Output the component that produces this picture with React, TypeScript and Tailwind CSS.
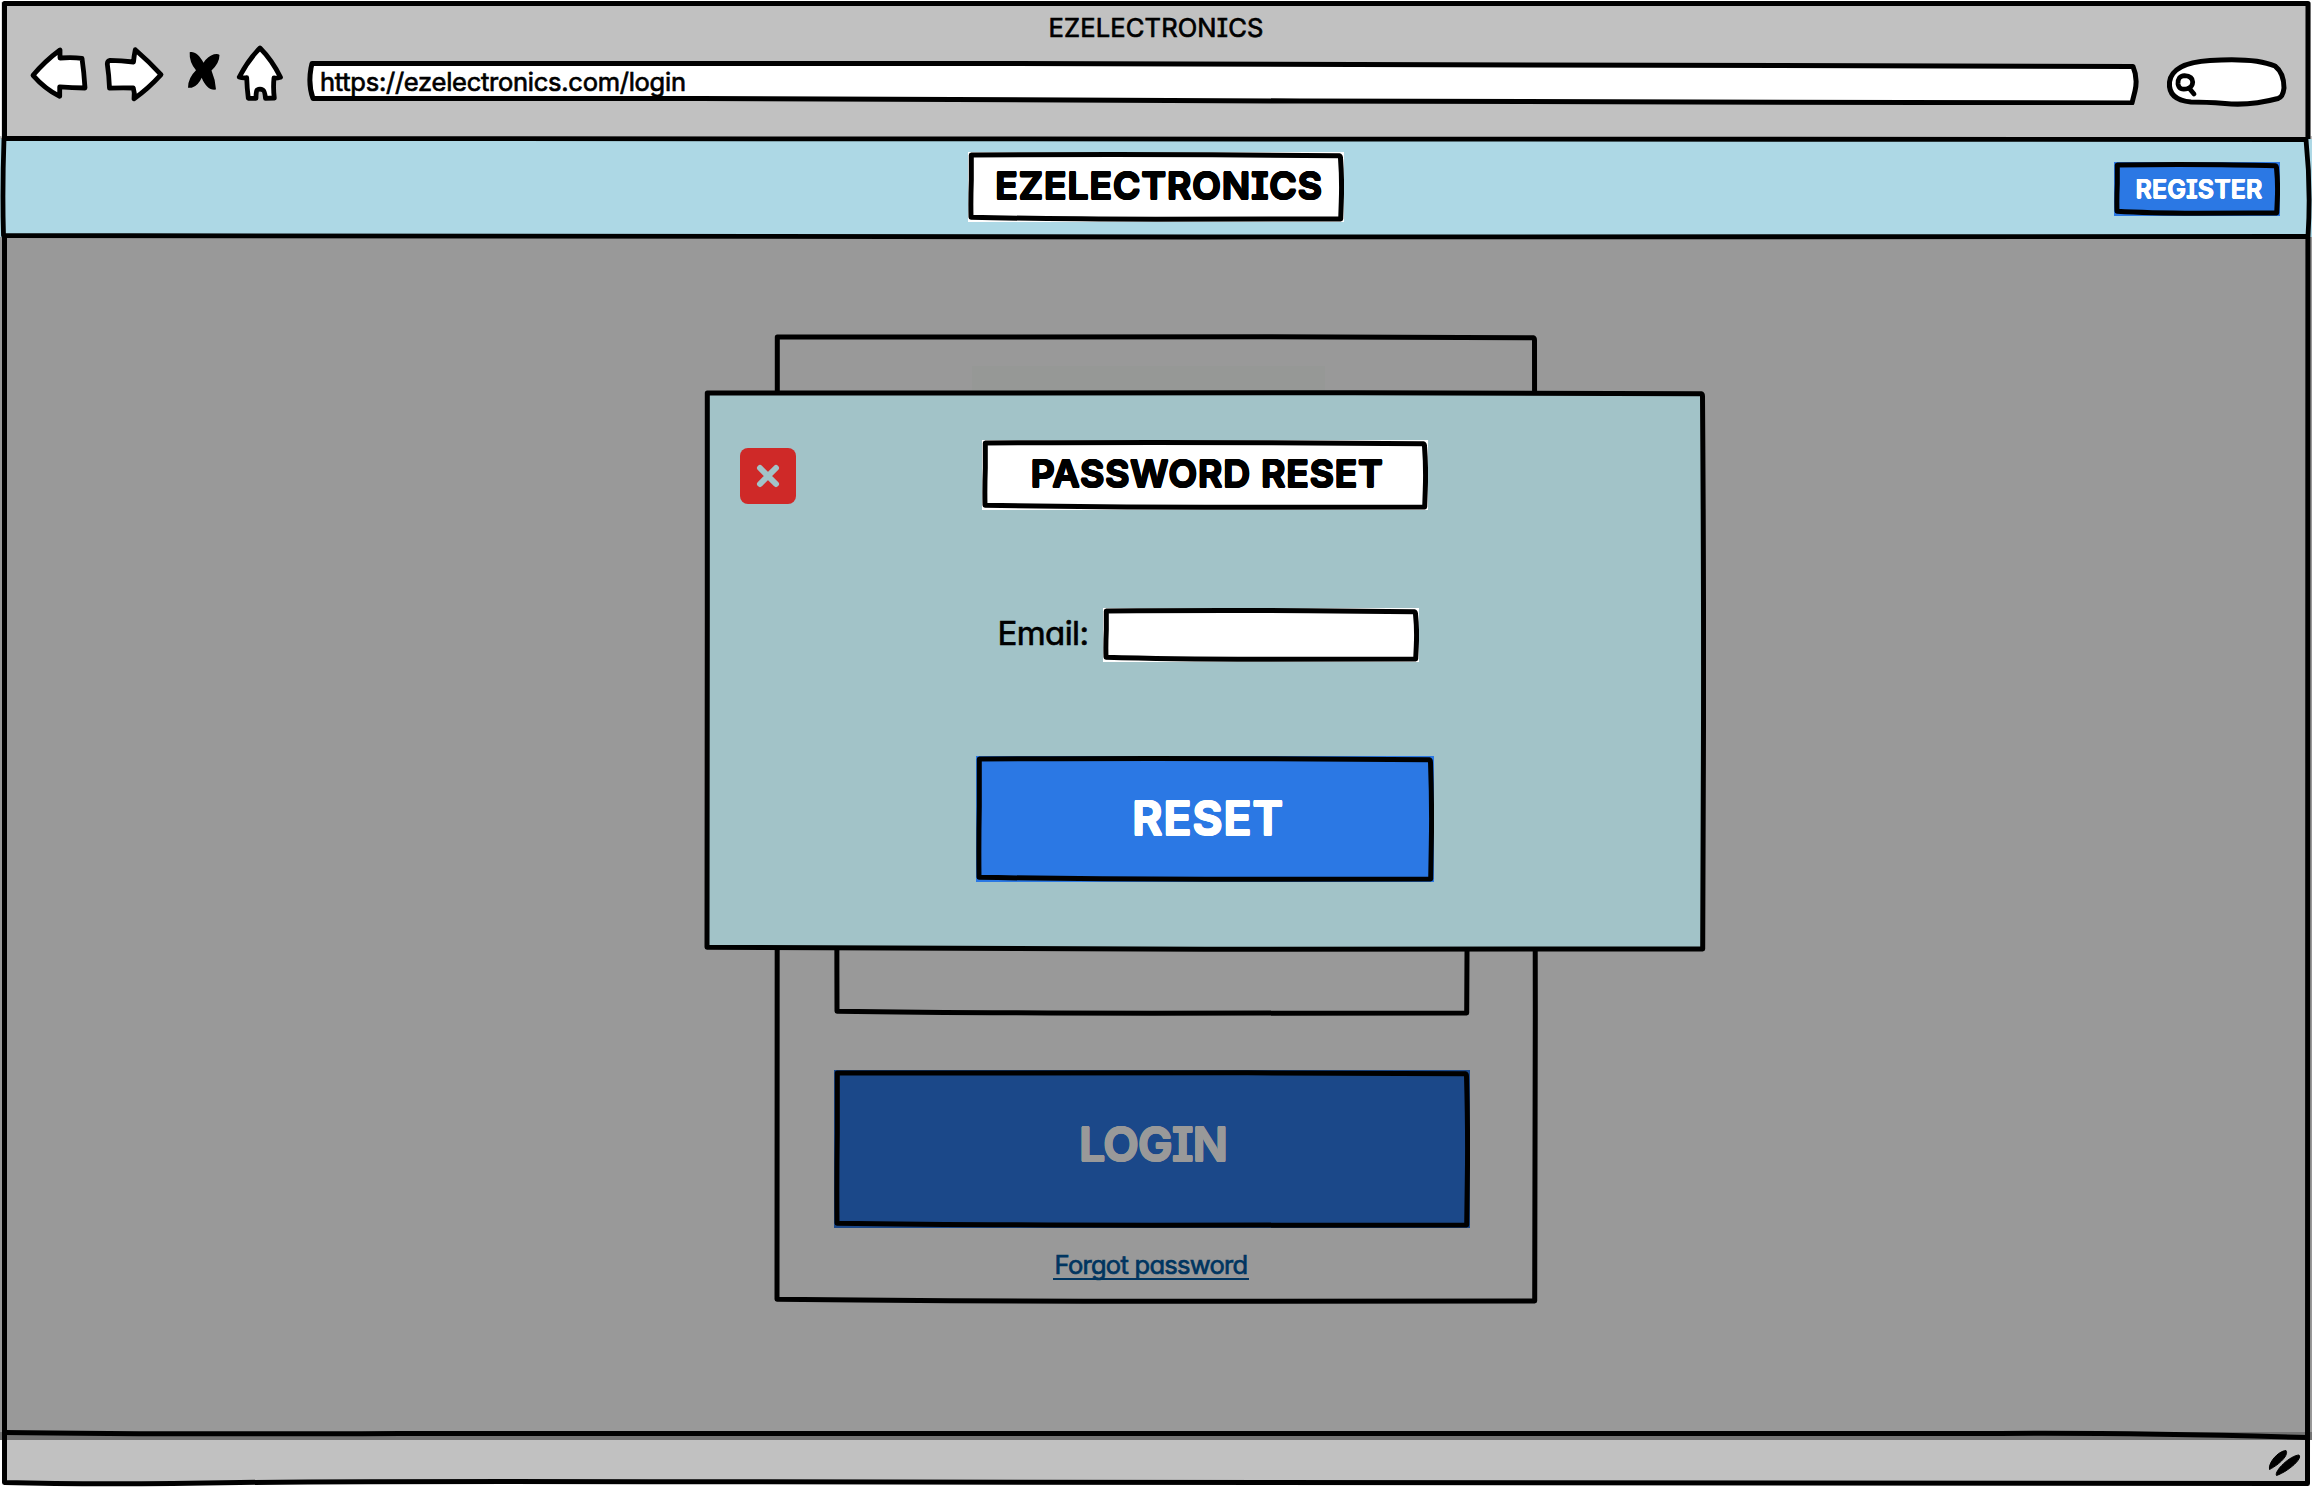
import type { ReactNode } from "react";

const HEAVY =
  "font-semibold [text-shadow:0.9px_0_0_currentColor,-0.9px_0_0_currentColor,0_0.9px_0_currentColor,0_-0.9px_0_currentColor,0.6px_0.6px_0_currentColor,-0.6px_0.6px_0_currentColor,0.6px_-0.6px_0_currentColor,-0.6px_-0.6px_0_currentColor]";
const HEAVY_SMALL =
  "font-semibold [text-shadow:0.5px_0_0_currentColor,-0.5px_0_0_currentColor,0_0.5px_0_currentColor,0_-0.5px_0_currentColor]";
const LIGHT = "font-normal [-webkit-text-stroke:0.7px_currentColor]";

/** Hand-drawn rectangle outline that fills its positioned parent. */
function Sketch({ w, h, fill = "none" }: { w: number; h: number; fill?: string }) {
  const d = [
    `M3.3 3`,
    `Q${w * 0.35} 2.2 ${w * 0.65} 2.8`,
    `T${w - 4.8} 3.7`,
    `Q${w - 3.6} 3.9 ${w - 3.5} 6`,
    `Q${w - 1.9} ${h * 0.4} ${w - 2.7} ${h * 0.7}`,
    `L${w - 3.3} ${h - 3}`,
    `Q${w * 0.75} ${h - 3.2} ${w * 0.5} ${h - 2.8}`,
    `Q${w * 0.2} ${h - 3} 3 ${h - 4.8}`,
    `Q2.6 ${h * 0.7} 3.3 ${h * 0.4}`,
    `Z`,
  ].join(" ");
  return (
    <svg className="pointer-events-none absolute inset-0" width={w} height={h} viewBox={`0 0 ${w} ${h}`}>
      <path d={d} fill={fill} stroke="#000" strokeWidth="5" strokeLinejoin="round" />
    </svg>
  );
}

function SketchBox({ w, h, className, children }: { w: number; h: number; className: string; children?: ReactNode }) {
  return (
    <div className={`relative flex shrink-0 items-center justify-center ${className}`}>
      <Sketch w={w} h={h} />
      {children}
    </div>
  );
}

function NavIcons() {
  return (
    <svg className="block" width="300" height="132" viewBox="0 0 300 132">
      <g fill="#fff" stroke="#000" strokeWidth="4.8" strokeLinejoin="round" strokeLinecap="round">
        <path d="M33 75.3 Q45 61 60 50 L60 58 Q73 57.3 82 58.3 Q84 72 85 88 Q72 87.5 59.700 86.800 L59.700 96.300 Q45 89 33 75.300Z" />
        <path d="M110 60.300 Q121 60.300 133.500 62 Q134 56 135.300 49.700 Q149 61.500 161 74.700 Q148 89 134 98.800 Q135 93 133.300 88 Q121 87.500 109.500 88.200 Q109 75 107.300 64 Q107.300 60.800 110 60.300Z" />
        <path d="M260 48 Q272 60 280.500 77.300 Q277 78.300 274 78 Q273 88 274.300 98 L265.500 98.300 Q264.800 91 263 90 Q260 88.300 257 90 Q256 92 256 98.300 L248.300 98.300 Q247 88 246.700 77.700 Q242.500 78.300 239.300 77 Q248 60 260 48Z" />
      </g>
      <path
        d="M189.7 52.300 C194 51 199.500 55 203.500 62.700 Q208 56 214 54.300 Q218 53.300 219.500 55 Q219.500 63 211.500 70.500 Q215.500 80 216 89.500 C210 90.500 205 86 201.700 77.700 Q198 86 191.700 87.700 L188 87.700 Q188 78 196 70.300 Q189 62 189.700 52.300Z"
        fill="#000"
      />
    </svg>
  );
}

function Chrome() {
  return (
    <div className="relative flex h-[139px] shrink-0 bg-[#c1c1c1]">
      <NavIcons />
      <div className="relative mt-[60px] flex h-[45px] w-[1840px] items-center pl-[20px]">
        <svg className="absolute inset-0" width="1840" height="45" viewBox="0 0 1840 45">
          <path
            d="M12 3.500 L700 3.500 Q1300 4 1833 6.500 Q1838 18 1835 31 L1832 43 Q1300 43 1000 41 Q700 38.500 400 38.500 L13 38.500 Q8 25 11 8Z"
            fill="#fff"
            stroke="#000"
            strokeWidth="5"
            strokeLinejoin="round"
          />
        </svg>
        <span className={`relative -top-px text-[25.5px] leading-none tracking-[-0.26px] ${LIGHT}`}>
          https://ezelectronics.com/login
        </span>
      </div>
      <svg className="ml-6 mt-[50px] block" width="130" height="62" viewBox="2164 50 130 62">
        <path
          d="M2191 102 Q2168 100 2169.500 82 Q2172 63 2210 60.500 Q2255 57.500 2275 66 Q2284 73 2284 88 Q2283 97 2278 98.500 Q2250 106 2225 103.500 Q2205 102 2191 102Z"
          fill="#fff"
          stroke="#000"
          strokeWidth="5"
          strokeLinejoin="round"
        />
        <g fill="none" stroke="#000" strokeWidth="4.800" strokeLinecap="round">
          <path d="M2188 88.500 Q2179 91 2178 84 Q2177.500 76 2184.500 75.600 Q2192.500 76 2192.700 82 Q2192.500 87 2188 88.500Z" />
          <path d="M2189 88 L2194 94" />
        </g>
      </svg>
      <span className={`absolute left-1/2 top-[14px] -translate-x-1/2 text-[25.5px] leading-[27px] tracking-[0.15px] ${LIGHT}`}>
        EZELECTRONICS
      </span>
    </div>
  );
}

function Header() {
  return (
    <header className="relative z-10 grid h-[98px] shrink-0 grid-cols-[1fr_auto_1fr] items-center bg-[#add8e5]">
      <svg className="absolute left-0 -top-[3px]" width="2312" height="104" viewBox="0 0 2312 104">
        <path
          d="M4 2.500 Q1200 2 2306 3.500 Q2311 52 2308 100.500 L1200 101 Q600 101 3.500 99.500 Q2.200 55 4 2.500Z"
          fill="none"
          stroke="#000"
          strokeWidth="4.800"
          strokeLinejoin="round"
        />
      </svg>
      <div />
      <SketchBox w={376} h={70} className="-mt-[3px] h-[70px] w-[376px] bg-white">
        <span className={`relative -top-px left-[3px] text-[37.5px] leading-none tracking-[0.8px] ${HEAVY}`}>EZELECTRONICS</span>
      </SketchBox>
      <div className="flex justify-end pr-8">
        <SketchBox w={166} h={54} className="mt-[2px] h-[54px] w-[166px] bg-[#2b78e4]">
          <span className={`relative left-0.5 text-[25px] leading-none tracking-[0.1px] text-white ${HEAVY_SMALL}`}>REGISTER</span>
        </SketchBox>
      </div>
    </header>
  );
}

function LoginCard() {
  return (
    <section className="relative flex h-[970px] w-[764px] flex-col pl-[60px]">
      <Sketch w={764} h={970} />
      <div className="ml-[138px] mt-[32px] h-10 w-[353px] bg-[#969896]" />
      <SketchBox w={636} h={399} className="mt-[211px] h-[399px] w-[636px]" />
      <SketchBox w={636} h={158} className="mt-[54px] h-[158px] w-[636px] bg-[#1b4889]">
        <span className={`relative -top-[5px] left-px text-[46.5px] leading-none tracking-[-0.9px] text-[#999] ${HEAVY}`}>LOGIN</span>
      </SketchBox>
      <a className={`relative ml-[219px] mt-[21px] flex h-[31px] w-[196px] justify-center border-b-2 border-[#003560] text-[25.5px] leading-[32px] tracking-[-0.72px] whitespace-nowrap text-[#003560] ${LIGHT}`}>
        Forgot password
      </a>
    </section>
  );
}

function ResetDialog() {
  return (
    <div className="absolute left-[704px] top-[153px] flex h-[562px] w-[1002px] flex-col items-center">
      <Sketch w={1002} h={562} fill="#a2c3c8" />
      <div className="relative mt-[50px] grid w-full grid-cols-[1fr_auto_1fr] items-center pl-9">
        <button className="relative top-px flex size-14 items-center justify-center rounded-lg bg-[#cf2928]">
          <svg width="24" height="24" viewBox="0 0 24 24">
            <path d="M4 4 L20 20 M20 4 L4 20" stroke="#a2c3c8" strokeWidth="6" strokeLinecap="round" />
          </svg>
        </button>
        <SketchBox w={446} h={70} className="-ml-9 h-[70px] w-[446px] bg-white">
          <span className={`relative -top-px left-[2px] text-[37.5px] leading-none tracking-[0.68px] ${HEAVY}`}>PASSWORD RESET</span>
        </SketchBox>
      </div>
      <div className="relative mt-[98px] flex h-[54px] items-center gap-[15px] pl-[7px]">
        <span className={`relative -top-[2px] text-[33px] leading-none tracking-[-0.6px] ${LIGHT}`}>Email:</span>
        <SketchBox w={316} h={54} className="h-[54px] w-[316px] bg-white" />
      </div>
      <SketchBox w={458} h={126} className="mt-[94px] h-[126px] w-[458px] bg-[#2b78e4]">
        <span className={`relative -top-px left-[3px] text-[46.5px] leading-none tracking-[0.8px] text-white ${HEAVY}`}>RESET</span>
      </SketchBox>
    </div>
  );
}

export default function App() {
  return (
    <div className="relative flex h-[1488px] w-[2312px] flex-col overflow-hidden bg-white font-['Inter',sans-serif] text-black [font-feature-settings:'cv11','cv08']">
      <Chrome />
      <Header />
      <main className="relative flex h-[1203px] shrink-0 justify-center border-b-[8px] border-[#747474] bg-[#999] pt-[97px]">
        <LoginCard />
        <ResetDialog />
      </main>
      <footer className="mx-1 flex h-[43px] shrink-0 items-start justify-end bg-[#c1c1c1] pr-1.5 pt-2">
        <svg width="36" height="30" viewBox="2266 1448 36 30">
          <path
            d="M2269.500 1469.500 C2268 1463 2278 1451 2286 1450.500 C2289 1455 2280 1464 2269.500 1469.500Z M2276.500 1475.500 C2274 1471 2290 1455.500 2299 1455 C2303 1459 2287 1472 2276.500 1475.500Z"
            fill="#000"
            stroke="#000"
            strokeLinejoin="round"
          />
        </svg>
      </footer>
      <svg className="pointer-events-none absolute inset-0" width="2312" height="1488" viewBox="0 0 2312 1488">
        <path d="M0 0 H2312 V2 H0Z M0 0 H1.500 V136 H0Z M2310.500 0 H2312 V136 H2310.500Z" fill="#fff" />
        <g fill="none" stroke="#000" strokeWidth="5" strokeLinejoin="round">
          <path d="M4.500 3.500 H2308 Q2307 700 2307.500 1483.500 Q1200 1484 700 1481.800 Q400 1481 240 1482.500 Q100 1485 4.500 1482.500 Q4.500 800 4.500 240Z" />
          <path d="M4.500 1432.500 Q140 1434.500 400 1433.500 H2000 Q2130 1432.500 2307 1437.500" />
        </g>
      </svg>
    </div>
  );
}
